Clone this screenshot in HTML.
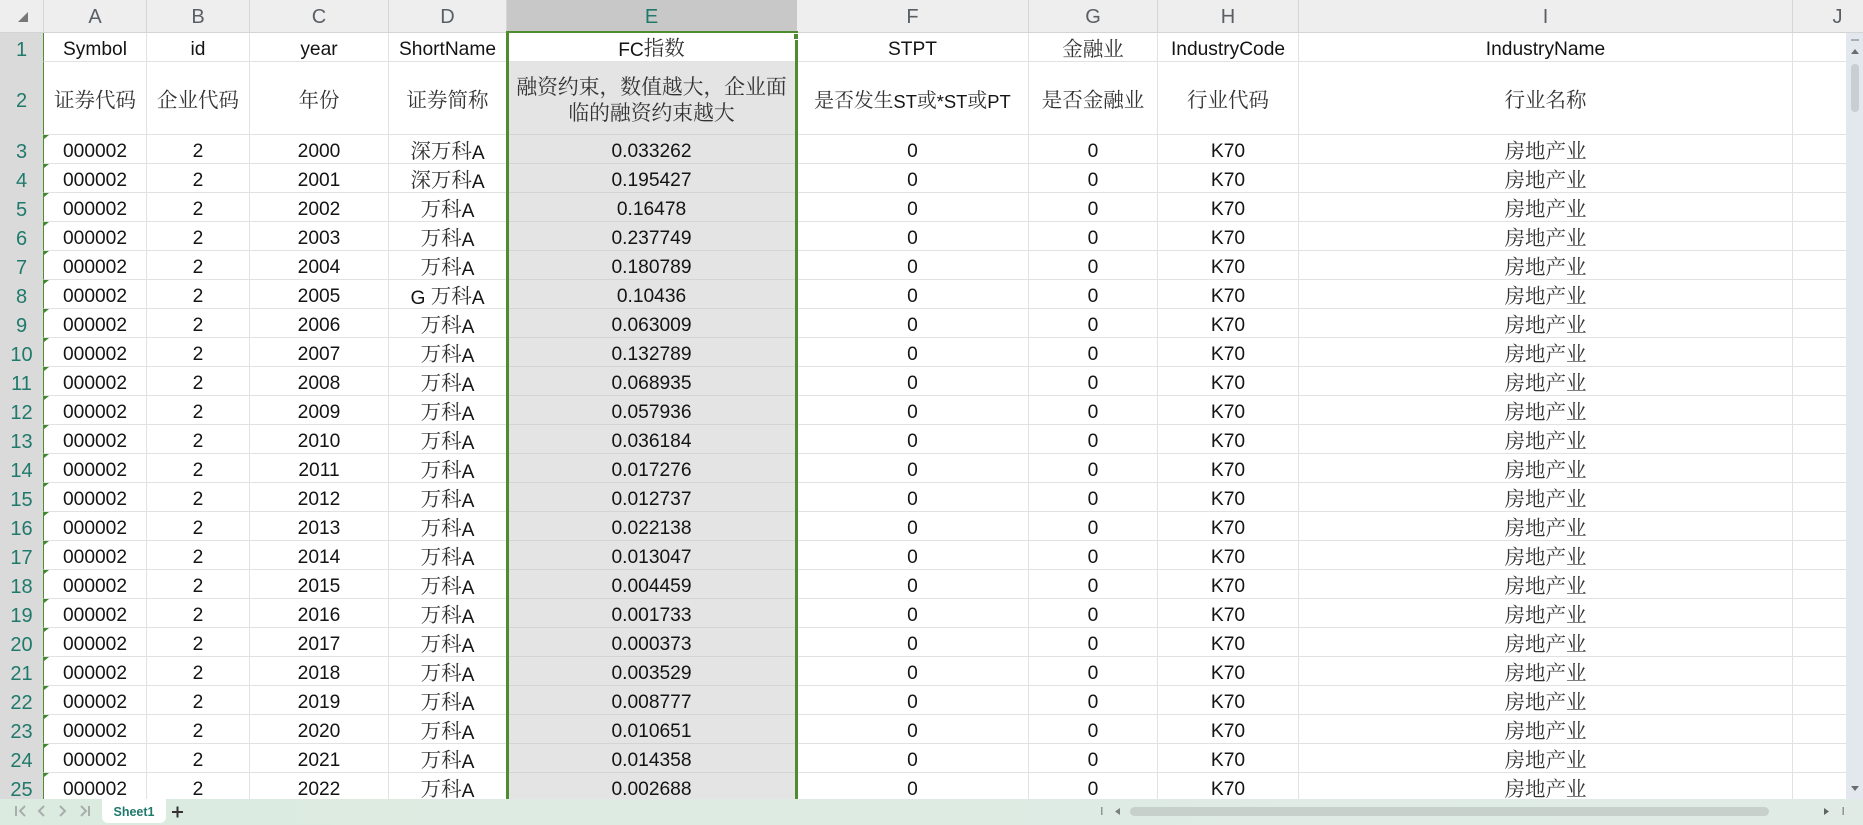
<!DOCTYPE html>
<html lang="zh"><head><meta charset="utf-8"><title>Sheet1</title>
<style>
html,body{margin:0;padding:0;width:1863px;height:825px;overflow:hidden;background:#fff}
body{position:relative;font-family:"Liberation Sans","Noto Serif CJK SC",sans-serif}
#grid{position:absolute;left:0;top:0;width:1863px;height:799px;overflow:hidden}
table{border-collapse:separate;border-spacing:0;table-layout:fixed;width:1883px;position:absolute;left:0;top:0}
td,th{padding:5px 0 0;border-right:1px solid #e2e2e2;border-bottom:1px solid #e2e2e2;text-align:center;vertical-align:middle;font-weight:400;font-size:19.2px;line-height:18px;color:#141414;overflow:hidden;white-space:nowrap;box-sizing:border-box}
tr{height:29px}
tr.h{height:33px}
tr.t{height:73px}
tr.h th{background:#eee;border-right:1px solid #d6d6d6;border-bottom:1px solid #d4d4d4;color:#5a5f66;font-size:20px;padding-top:2px}
tr.h th.s{background:#c8c8c8;color:#1f7a6c;border-right-color:#c8c8c8}
td.r,th.r{background:#dadada;color:#1f7a6c;font-size:20px;border-right:1.5px solid #4e8c2f;border-bottom:1px solid #dadada;text-align:center}
tr.h th.r{background:#eee;border-right:1px solid #d6d6d6;border-bottom:1px solid #d4d4d4}
td.e{background:#e4e4e4;border-bottom-color:#d4d4d4;border-right-color:#e4e4e4}
td.a{background:#fff;padding-top:3px}
i{font-style:normal;font-family:"Noto Serif CJK SC","Liberation Serif",serif;font-size:20.5px;line-height:18px;color:#333;font-weight:400;position:relative;top:-1px}
td.e i.l{display:block;font-size:20.8px;line-height:26px;top:0}
td.f{font-size:18.4px}
td.f i{font-size:19.8px}
#sel{position:absolute;left:506px;top:31px;width:292px;height:780px;box-sizing:border-box;border:3px solid #4e8c2f;border-top-width:2px;border-bottom:0}
#hd{position:absolute;left:794px;top:34px;width:4px;height:5px;background:#4e8c2f;outline:1px solid #fff}
#vs{position:absolute;left:1846px;top:33px;width:17px;height:766px;background:#e2e8ee}
#bar{position:absolute;left:0;top:799px;width:1863px;height:26px;background:linear-gradient(90deg,#dcebe0,#e0ebe6);border-top:0}
#tab{position:absolute;left:102px;top:0;width:64px;height:24px;background:#fff;border-radius:0 0 6px 6px;font:bold 12.5px/26px "Liberation Sans",sans-serif;color:#1f7a6c;text-align:center}
svg{position:absolute;left:0;top:0}
</style></head><body>
<div id="grid">
<table>
<colgroup><col style="width:44px"><col style="width:103px"><col style="width:103px"><col style="width:139px"><col style="width:118px"><col style="width:290px"><col style="width:232px"><col style="width:129px"><col style="width:141px"><col style="width:494px"><col style="width:90px"></colgroup>
<tr class="h"><th class="r"></th><th>A</th><th>B</th><th>C</th><th>D</th><th class="s">E</th><th>F</th><th>G</th><th>H</th><th>I</th><th>J</th></tr>
<tr style="height:29px"><td class="r">1</td><td>Symbol</td><td>id</td><td>year</td><td>ShortName</td><td class="a">FC<i>指数</i></td><td>STPT</td><td><i>金融业</i></td><td>IndustryCode</td><td>IndustryName</td><td></td></tr>
<tr class="t"><td class="r">2</td><td><i>证券代码</i></td><td><i>企业代码</i></td><td><i>年份</i></td><td><i>证券简称</i></td><td class="e" style="padding:0"><i class="l">融资约束，数值越大，企业面</i><i class="l">临的融资约束越大</i></td><td class="f"><i>是否发生</i>ST<i>或</i>*ST<i>或</i>PT</td><td><i>是否金融业</i></td><td><i>行业代码</i></td><td><i>行业名称</i></td><td></td></tr>
<tr><td class="r">3</td><td>000002</td><td>2</td><td>2000</td><td><i>深万科</i>A</td><td class="e">0.033262</td><td>0</td><td>0</td><td>K70</td><td><i>房地产业</i></td><td></td></tr>
<tr><td class="r">4</td><td>000002</td><td>2</td><td>2001</td><td><i>深万科</i>A</td><td class="e">0.195427</td><td>0</td><td>0</td><td>K70</td><td><i>房地产业</i></td><td></td></tr>
<tr><td class="r">5</td><td>000002</td><td>2</td><td>2002</td><td><i>万科</i>A</td><td class="e">0.16478</td><td>0</td><td>0</td><td>K70</td><td><i>房地产业</i></td><td></td></tr>
<tr><td class="r">6</td><td>000002</td><td>2</td><td>2003</td><td><i>万科</i>A</td><td class="e">0.237749</td><td>0</td><td>0</td><td>K70</td><td><i>房地产业</i></td><td></td></tr>
<tr><td class="r">7</td><td>000002</td><td>2</td><td>2004</td><td><i>万科</i>A</td><td class="e">0.180789</td><td>0</td><td>0</td><td>K70</td><td><i>房地产业</i></td><td></td></tr>
<tr><td class="r">8</td><td>000002</td><td>2</td><td>2005</td><td>G <i>万科</i>A</td><td class="e">0.10436</td><td>0</td><td>0</td><td>K70</td><td><i>房地产业</i></td><td></td></tr>
<tr><td class="r">9</td><td>000002</td><td>2</td><td>2006</td><td><i>万科</i>A</td><td class="e">0.063009</td><td>0</td><td>0</td><td>K70</td><td><i>房地产业</i></td><td></td></tr>
<tr><td class="r">10</td><td>000002</td><td>2</td><td>2007</td><td><i>万科</i>A</td><td class="e">0.132789</td><td>0</td><td>0</td><td>K70</td><td><i>房地产业</i></td><td></td></tr>
<tr><td class="r">11</td><td>000002</td><td>2</td><td>2008</td><td><i>万科</i>A</td><td class="e">0.068935</td><td>0</td><td>0</td><td>K70</td><td><i>房地产业</i></td><td></td></tr>
<tr><td class="r">12</td><td>000002</td><td>2</td><td>2009</td><td><i>万科</i>A</td><td class="e">0.057936</td><td>0</td><td>0</td><td>K70</td><td><i>房地产业</i></td><td></td></tr>
<tr><td class="r">13</td><td>000002</td><td>2</td><td>2010</td><td><i>万科</i>A</td><td class="e">0.036184</td><td>0</td><td>0</td><td>K70</td><td><i>房地产业</i></td><td></td></tr>
<tr><td class="r">14</td><td>000002</td><td>2</td><td>2011</td><td><i>万科</i>A</td><td class="e">0.017276</td><td>0</td><td>0</td><td>K70</td><td><i>房地产业</i></td><td></td></tr>
<tr><td class="r">15</td><td>000002</td><td>2</td><td>2012</td><td><i>万科</i>A</td><td class="e">0.012737</td><td>0</td><td>0</td><td>K70</td><td><i>房地产业</i></td><td></td></tr>
<tr><td class="r">16</td><td>000002</td><td>2</td><td>2013</td><td><i>万科</i>A</td><td class="e">0.022138</td><td>0</td><td>0</td><td>K70</td><td><i>房地产业</i></td><td></td></tr>
<tr><td class="r">17</td><td>000002</td><td>2</td><td>2014</td><td><i>万科</i>A</td><td class="e">0.013047</td><td>0</td><td>0</td><td>K70</td><td><i>房地产业</i></td><td></td></tr>
<tr><td class="r">18</td><td>000002</td><td>2</td><td>2015</td><td><i>万科</i>A</td><td class="e">0.004459</td><td>0</td><td>0</td><td>K70</td><td><i>房地产业</i></td><td></td></tr>
<tr><td class="r">19</td><td>000002</td><td>2</td><td>2016</td><td><i>万科</i>A</td><td class="e">0.001733</td><td>0</td><td>0</td><td>K70</td><td><i>房地产业</i></td><td></td></tr>
<tr><td class="r">20</td><td>000002</td><td>2</td><td>2017</td><td><i>万科</i>A</td><td class="e">0.000373</td><td>0</td><td>0</td><td>K70</td><td><i>房地产业</i></td><td></td></tr>
<tr><td class="r">21</td><td>000002</td><td>2</td><td>2018</td><td><i>万科</i>A</td><td class="e">0.003529</td><td>0</td><td>0</td><td>K70</td><td><i>房地产业</i></td><td></td></tr>
<tr><td class="r">22</td><td>000002</td><td>2</td><td>2019</td><td><i>万科</i>A</td><td class="e">0.008777</td><td>0</td><td>0</td><td>K70</td><td><i>房地产业</i></td><td></td></tr>
<tr><td class="r">23</td><td>000002</td><td>2</td><td>2020</td><td><i>万科</i>A</td><td class="e">0.010651</td><td>0</td><td>0</td><td>K70</td><td><i>房地产业</i></td><td></td></tr>
<tr><td class="r">24</td><td>000002</td><td>2</td><td>2021</td><td><i>万科</i>A</td><td class="e">0.014358</td><td>0</td><td>0</td><td>K70</td><td><i>房地产业</i></td><td></td></tr>
<tr><td class="r">25</td><td>000002</td><td>2</td><td>2022</td><td><i>万科</i>A</td><td class="e">0.002688</td><td>0</td><td>0</td><td>K70</td><td><i>房地产业</i></td><td></td></tr>
</table>
<svg width="1846" height="799" style="pointer-events:none">
<path d="M18 22H28V12Z" fill="#777"/>
<path fill="#3e8a2f" d="M44 135h5l-5 4zM44 164h5l-5 4zM44 193h5l-5 4zM44 222h5l-5 4zM44 251h5l-5 4zM44 280h5l-5 4zM44 309h5l-5 4zM44 338h5l-5 4zM44 367h5l-5 4zM44 396h5l-5 4zM44 425h5l-5 4zM44 454h5l-5 4zM44 483h5l-5 4zM44 512h5l-5 4zM44 541h5l-5 4zM44 570h5l-5 4zM44 599h5l-5 4zM44 628h5l-5 4zM44 657h5l-5 4zM44 686h5l-5 4zM44 715h5l-5 4zM44 744h5l-5 4zM44 773h5l-5 4z"/>
</svg>
<div id="sel"></div><div id="hd"></div>
</div>
<div id="vs">
<svg width="17" height="766">
<rect x="5" y="6" width="8" height="2" fill="#a9aeb3"/>
<path d="M9 16l4 5H5z" fill="#6a6e72"/>
<rect x="5" y="31" width="8" height="48" rx="4" fill="#c8ced2"/>
<path d="M5 753h8l-4 5z" fill="#6a6e72"/>
</svg>
</div>
<div id="bar">
<svg width="1863" height="26" fill="none">
<g stroke="#a8aeac" stroke-width="2">
<path d="M16 7v10M25 7l-5 5 5 5"/>
<path d="M44 7l-5 5 5 5"/>
<path d="M60 7l5 5-5 5"/>
<path d="M81 7l5 5-5 5M89 7v10"/>
</g>
<path d="M172 13h11M177.500 7.500v11" stroke="#333" stroke-width="2"/>
<rect x="1101" y="8" width="1.500" height="8" fill="#8f9694"/>
<path d="M1120 9v7l-5-3.500z" fill="#7a807e"/>
<rect x="1130" y="8" width="639" height="9" rx="4.500" fill="#c8d0cc"/>
<path d="M1824 9v7l5-3.500z" fill="#5f6563"/>
<rect x="1842.500" y="8" width="1.500" height="8" fill="#8f9694"/>
</svg>
<div id="tab">Sheet1</div>
</div>
</body></html>
